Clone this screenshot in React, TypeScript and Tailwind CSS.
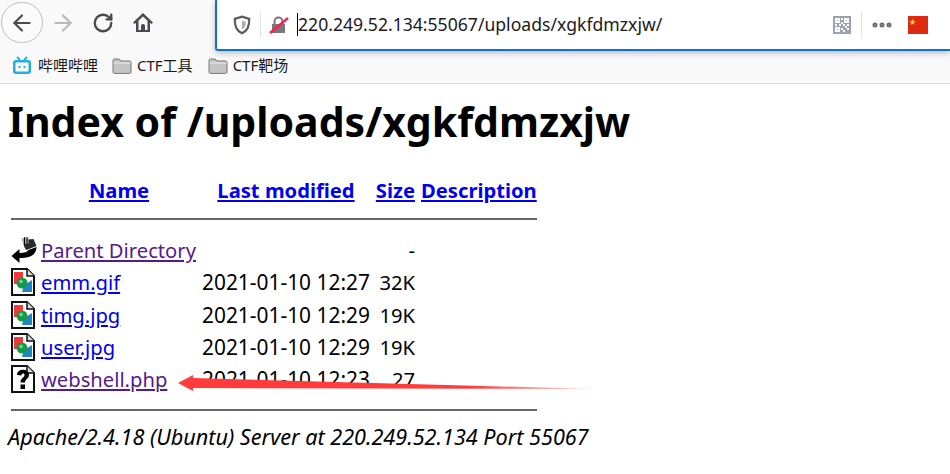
import React from 'react';
import { ArrowLeft, ArrowRight, RotateCw, Ellipsis } from 'lucide-react';

const rows = [
  { name: 'emm.gif', date: '2021-01-10 12:27', size: '32K', kind: 'image', visited: false },
  { name: 'timg.jpg', date: '2021-01-10 12:29', size: '19K', kind: 'image', visited: false },
  { name: 'user.jpg', date: '2021-01-10 12:29', size: '19K', kind: 'image', visited: false },
  { name: 'webshell.php', date: '2021-01-10 12:23', size: '27', kind: 'unknown', visited: true },
];

const Folder = () => (
  <svg width="20" height="18" viewBox="0 0 20 18">
    <path d="M1 15V3.5C1 2.7 1.6 2 2.4 2H7l2 2h8.6c.8 0 1.4.6 1.4 1.4V15c0 .8-.6 1.4-1.4 1.4H2.4C1.6 16.4 1 15.8 1 15z" fill="#c4c4c4" stroke="#777" strokeWidth="1" />
    <path d="M1.5 6h17" stroke="#eee" strokeWidth="1" />
  </svg>
);

const FileIcon = ({ kind }: { kind: string }) => (
  <svg width="24" height="28" viewBox="0 0 24 28">
    <path d="M1 1h15l7 7v19H1z" fill="#fff" stroke="#111" strokeWidth="2" />
    <path d="M16 1v7h7" fill="#ddd" stroke="#111" strokeWidth="1.5" />
    {kind === 'image' ? (
      <>
        <path d="M3 4h9v9H8v3H3z" fill="#f03a3a" />
        <path d="M13 17l8-5v12h-10z" fill="#1f86c6" />
        <circle cx="11" cy="15" r="5.500" fill="#159a4b" />
        <circle cx="10" cy="13.500" r="1.800" fill="#7fd09a" />
      </>
    ) : (
      <path d="M6 10c0-7 12-7 12 0 0 4-4 3.500-4 7.500H9.500c0-5 4-4.500 4-7.500 0-2-3-2-3.200.6zM9.500 19.500H14V24H9.500z" fill="#000" />
    )}
  </svg>
);

const ParentIcon = () => (
  <svg width="27" height="26" viewBox="0 0 26 26">
    <path d="M0 19l8-7v4c5 0 8-1 9-3l8-3c0 7-5 11-17 11v5z" fill="#000" />
    <path d="M11 3l11-1 3 7-10 4c-2-1-3-6-4-10z" fill="#2a2a2a" />
    <path d="M10 1h7v6h-5z" fill="#aaa" />
    <path d="M13 0v8M15.500 0v8" stroke="#000" strokeWidth="1" />
  </svg>
);

const Toolbar = () => (
  <div className="relative h-[84px] bg-[#f9f9fa] border-b border-[#dcdcdc] text-[15px] font-['Noto_Sans','Noto_Sans_CJK_SC',sans-serif]">
    <div className="flex h-[50px] items-start">
      <div className="flex w-[215px] items-center pl-[1px] pt-[2px]">
        <div className="flex h-[41px] w-[42px] items-center justify-center rounded-full border border-[#bdbdbd] bg-[#fbfbfb]">
          <ArrowLeft size={26} strokeWidth={2} color="#4a4a4f" />
        </div>
        <ArrowRight size={26} strokeWidth={2} color="#b9b9bb" className="ml-[7px]" />
        <RotateCw size={22} strokeWidth={2.600} color="#4a4a4f" className="ml-[16px]" />
        <svg width="22" height="22" viewBox="0 0 22 22" className="ml-[18px]">
          <path d="M11 1L1 10.500l1.500 1.500L4 10.700V20h14v-9.300l1.500 1.300L21 10.500zM11 4.500l4.500 4.200V18h-2.500v-4a2 2 0 0 0-4 0v4H6.500V8.700z" fill="#4a4a4f" />
        </svg>
      </div>
      <div className="z-10 flex h-[51px] flex-1 items-center rounded-bl-[3px] border-b-2 border-l-2 border-[#0a74d6] bg-white shadow-[0_2px_6px_rgba(0,0,0,0.25)]">
        <svg width="18" height="20" viewBox="0 0 16 18" className="ml-[16px]">
          <path d="M8 1.500l6.500 2c0 7-1.500 10.500-6.500 13-5-2.500-6.500-6-6.500-13z" fill="none" stroke="#5b5b60" strokeWidth="2" />
          <path d="M8 5l3.500 1c0 3.500-1 5.500-3.500 7z" fill="#5b5b60" opacity="0.5" />
        </svg>
        <div className="ml-[9px] h-[26px] w-px bg-[#e3e3e3]" />
        <svg width="20" height="20" viewBox="0 0 20 20" className="ml-[8px]">
          <path d="M3 9h1.500V6.500a5 5 0 0 1 10 0V9H16v9H3zM6.500 9h6V6.500a3 3 0 0 0-6 0z" fill="#77777b" fillRule="evenodd" />
          <path d="M1 18L19 3" stroke="#ff1f4f" strokeWidth="2.500" />
        </svg>
        <div className="ml-[8px] h-[23px] w-px bg-black" />
        <span className="text-[17.600px] text-[#1a1a1a]">220.249.52.134:55067/uploads/xgkfdmzxjw/</span>
        <div className="flex-1" />
        <svg width="18" height="18" viewBox="0 0 18 18">
          <rect width="18" height="18" fill="#9aa3b0" />
          <path d="M2 2h5v5H2zM11 2h5v5h-5zM2 11h5v5H2zM8 2h2v2H8zM8 6h2v2H8zM2 8h2v2H2zM6 8h2v2H6zM10 8h2v2h-2zM14 8h2v2h-2zM8 12h2v2H8zM12 10h2v2h-2zM10 14h2v2h-2zM14 12h2v2h-2z" fill="#fff" />
          <path d="M4 4h1v1H4zM13 4h1v1h-1zM4 13h1v1H4z" fill="#9aa3b0" />
        </svg>
        <div className="ml-[10px] h-[26px] w-px bg-[#e3e3e3]" />
        <Ellipsis size={24} strokeWidth={3} color="#6a6a6f" className="ml-[8px]" />
        <div className="ml-[14px] mr-[22px] h-[18px] w-[20px] bg-[#de2a10] pl-[1px] pt-[2px] text-[7px] leading-none text-[#ffd83c]">★</div>
      </div>
    </div>
    <div className="flex h-[31px] items-center pl-[12px] text-[#1a1a1a]">
      <svg width="20" height="20" viewBox="0 0 20 20">
        <path d="M5 1l3 3M15 1l-3 3" stroke="#23ade5" strokeWidth="1.800" />
        <rect x="1" y="4" width="18" height="14" rx="3" fill="#23ade5" />
        <rect x="3.500" y="6.500" width="13" height="9" rx="1" fill="#fff" />
        <circle cx="7.500" cy="11" r="1.200" fill="#23ade5" />
        <circle cx="12.500" cy="11" r="1.200" fill="#23ade5" />
      </svg>
      <span className="ml-[6px] leading-none">哔哩哔哩</span>
      <span className="ml-[14px] flex"><Folder /></span>
      <span className="ml-[5px] leading-none">CTF工具</span>
      <span className="ml-[15px] flex"><Folder /></span>
      <span className="ml-[5px] leading-none">CTF靶场</span>
    </div>
  </div>
);

const Listing = () => (
  <table className="ml-[3px] mt-[25px] border-separate border-spacing-0 text-[20.200px] leading-[26px]">
    <thead>
      <tr className="h-[32px]">
        <th className="w-[30px] min-w-[30px]" />
        <th className="w-[161px] min-w-[161px] pr-[5px] text-center">
          <a className="font-bold text-[#0000ee] underline">Name</a>
        </th>
        <th className="w-[171px] min-w-[171px] pr-[3px] text-center">
          <a className="font-bold text-[#0000ee] underline">Last modified</a>
        </th>
        <th className="w-[42px] min-w-[42px] text-right">
          <a className="font-bold text-[#0000ee] underline">Size</a>
        </th>
        <th className="pl-[6px] text-left">
          <a className="font-bold text-[#0000ee] underline">Description</a>
        </th>
      </tr>
      <tr className="h-[28px]">
        <th colSpan={5} className="pb-[2px] align-middle">
          <hr className="border-t-2 border-[#666]" />
        </th>
      </tr>
    </thead>
    <tbody>
      <tr className="h-[32px]">
        <td className="align-middle"><ParentIcon /></td>
        <td><a className="text-[#551a8b] underline">Parent Directory</a></td>
        <td />
        <td className="text-right">-</td>
        <td />
      </tr>
      {rows.map((row) => (
        <tr key={row.name} className="h-[32.400px]">
          <td className="align-middle"><FileIcon kind={row.kind} /></td>
          <td>
            <a className={row.visited ? 'text-[#551a8b] underline' : 'text-[#0000ee] underline'}>{row.name}</a>
          </td>
          <td className="whitespace-nowrap text-[20.900px]">{row.date}</td>
          <td className="text-right">{row.size}</td>
          <td />
        </tr>
      ))}
      <tr className="h-[28px]">
        <th colSpan={5} className="align-middle">
          <hr className="border-t-2 border-[#666]" />
        </th>
      </tr>
    </tbody>
  </table>
);

export default function App() {
  return (
    <div className="relative h-[474px] w-[950px] overflow-hidden bg-white text-black font-['Noto_Sans',sans-serif]">
      <Toolbar />
      <div className="px-[8px] pt-[9px]">
        <h1 className="text-[41px] font-bold leading-[56px]">Index of /uploads/xgkfdmzxjw</h1>
        <Listing />
        <address className="whitespace-nowrap text-[21.600px] italic leading-[26px]">
          Apache/2.4.18 (Ubuntu) Server at 220.249.52.134 Port 55067
        </address>
      </div>
      {/* red annotation arrow drawn over the listing */}
      <svg className="absolute left-[170px] top-[365px]" width="440" height="40" viewBox="0 0 440 40">
        <defs>
          <linearGradient id="fade" x1="0" x2="1" y1="0" y2="0">
            <stop offset="0.700" stopColor="#ff3b3b" />
            <stop offset="1" stopColor="#ff3b3b" stopOpacity="0.150" />
          </linearGradient>
        </defs>
        <path d="M8 18L23 10v3l404 11-404 -1v3z" fill="url(#fade)" />
      </svg>
    </div>
  );
}
